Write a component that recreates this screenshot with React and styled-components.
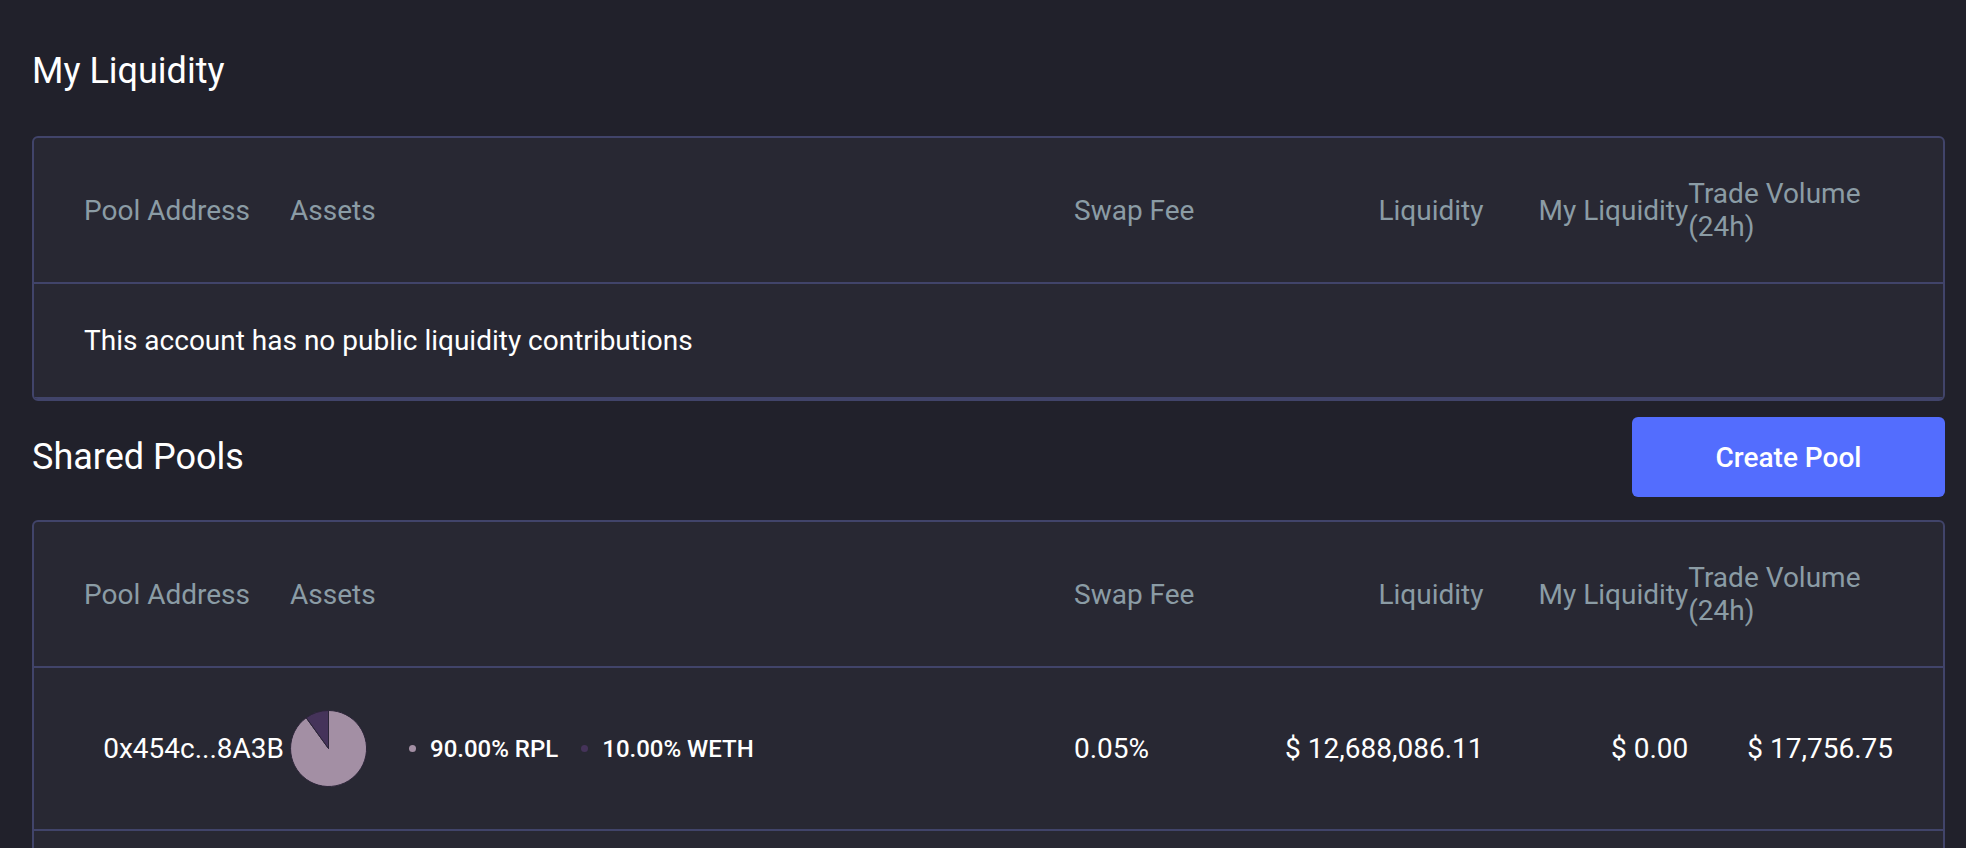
import React from "react";
import styled, { createGlobalStyle } from "styled-components";

const GlobalStyle = createGlobalStyle`
  html, body {
    margin: 0;
    padding: 0;
    background: #21212b;
    font-family: Roboto, "Noto Sans", "Liberation Sans", sans-serif;
    color: #ffffff;
  }
  * { box-sizing: border-box; }
`;

const Page = styled.main`
  padding: 0 21px 0 32px;
`;

const Title = styled.h2`
  margin: 0;
  font-size: 36px;
  line-height: 42px;
  font-weight: 400;
  color: #ffffff;
`;

const TopTitle = styled(Title)`
  padding-top: 50px;
  margin-bottom: 44px;
`;

const SectionHeader = styled.div`
  display: flex;
  align-items: center;
  justify-content: space-between;
  margin: 16px 0 23px;
  height: 80px;
`;

const CreateButton = styled.button`
  width: 313px;
  height: 80px;
  border: none;
  border-radius: 6px;
  background: #536dfe;
  color: #ffffff;
  font-family: inherit;
  font-size: 28px;
  font-weight: 500;
  cursor: pointer;
`;

const Card = styled.section`
  background: #282833;
  border: 2px solid #41446a;
  border-radius: 6px;
  overflow: hidden;
`;

const Row = styled.div`
  display: grid;
  grid-template-columns: 206px 784px repeat(4, 1fr);
  align-items: center;
  padding: 0 50px;
  height: ${(p) => p.$h}px;
  border-bottom: 2px solid #41446a;
`;

const HeadCell = styled.div`
  font-size: 28px;
  color: #8b9ca5;
  text-align: ${(p) => p.$align || "left"};
`;

const Cell = styled.div`
  font-size: 28px;
  color: #ffffff;
  display: flex;
  align-items: center;
  justify-content: ${(p) => (p.$align === "right" ? "flex-end" : "flex-start")};
  padding-right: ${(p) => p.$pr || 0}px;
  white-space: nowrap;
`;

const EmptyText = styled.div`
  grid-column: 1 / -1;
  font-size: 28px;
  color: #ffffff;
`;

const Assets = styled.div`
  display: flex;
  align-items: center;
`;

const Legend = styled.div`
  display: flex;
  align-items: center;
  gap: 23px;
  margin-left: 42px;
`;

const LegendItem = styled.div`
  display: flex;
  align-items: center;
  gap: 14px;
  font-size: 24px;
  font-weight: 500;
  color: #ffffff;
`;

const Dot = styled.span`
  width: 7px;
  height: 7px;
  border-radius: 50%;
  background: ${(p) => p.$color};
`;

function Pie() {
  return (
    <svg width="77" height="77" viewBox="0 0 77 77">
      <path
        d="M38.5 38.5 L16.2 7.76 A38 38 0 1 0 38.5 0.5 Z"
        fill="#a38fa4"
        stroke="#2b2538"
        strokeWidth="1"
      />
      <path
        d="M38.5 38.5 L38.5 0.5 A38 38 0 0 0 16.2 7.76 Z"
        fill="#45335a"
        stroke="#2b2538"
        strokeWidth="1"
      />
    </svg>
  );
}

function Header() {
  return (
    <Row $h={146}>
      <HeadCell>Pool Address</HeadCell>
      <HeadCell>Assets</HeadCell>
      <HeadCell>Swap Fee</HeadCell>
      <HeadCell $align="right">Liquidity</HeadCell>
      <HeadCell $align="right">My Liquidity</HeadCell>
      <HeadCell>Trade Volume (24h)</HeadCell>
    </Row>
  );
}

const pools = [
  {
    address: "0x454c...8A3B",
    assets: [
      { label: "90.00% RPL", color: "#a38fa4" },
      { label: "10.00% WETH", color: "#45335a" },
    ],
    fee: "0.05%",
    liquidity: "$ 12,688,086.11",
    mine: "$ 0.00",
    volume: "$ 17,756.75",
  },
  {
    address: "0x59a1...1C0F",
    assets: [
      { label: "80.00% BAL", color: "#a38fa4" },
      { label: "20.00% WETH", color: "#45335a" },
    ],
    fee: "0.10%",
    liquidity: "$ 9,412,530.48",
    mine: "$ 0.00",
    volume: "$ 12,304.19",
  },
];

export default function App() {
  return (
    <>
      <GlobalStyle />
      <Page>
        <TopTitle>My Liquidity</TopTitle>
        <Card>
          <Header />
          <Row $h={115}>
            <EmptyText>This account has no public liquidity contributions</EmptyText>
          </Row>
        </Card>

        <SectionHeader>
          <Title>Shared Pools</Title>
          <CreateButton>Create Pool</CreateButton>
        </SectionHeader>

        <Card>
          <Header />
          {pools.map((p) => (
            <Row key={p.address} $h={163}>
              <Cell $align="right" $pr={6}>{p.address}</Cell>
              <Assets>
                <Pie />
                <Legend>
                  {p.assets.map((a) => (
                    <LegendItem key={a.label}>
                      <Dot $color={a.color} />
                      {a.label}
                    </LegendItem>
                  ))}
                </Legend>
              </Assets>
              <Cell>{p.fee}</Cell>
              <Cell $align="right">{p.liquidity}</Cell>
              <Cell $align="right">{p.mine}</Cell>
              <Cell $align="right">{p.volume}</Cell>
            </Row>
          ))}
        </Card>
      </Page>
    </>
  );
}
